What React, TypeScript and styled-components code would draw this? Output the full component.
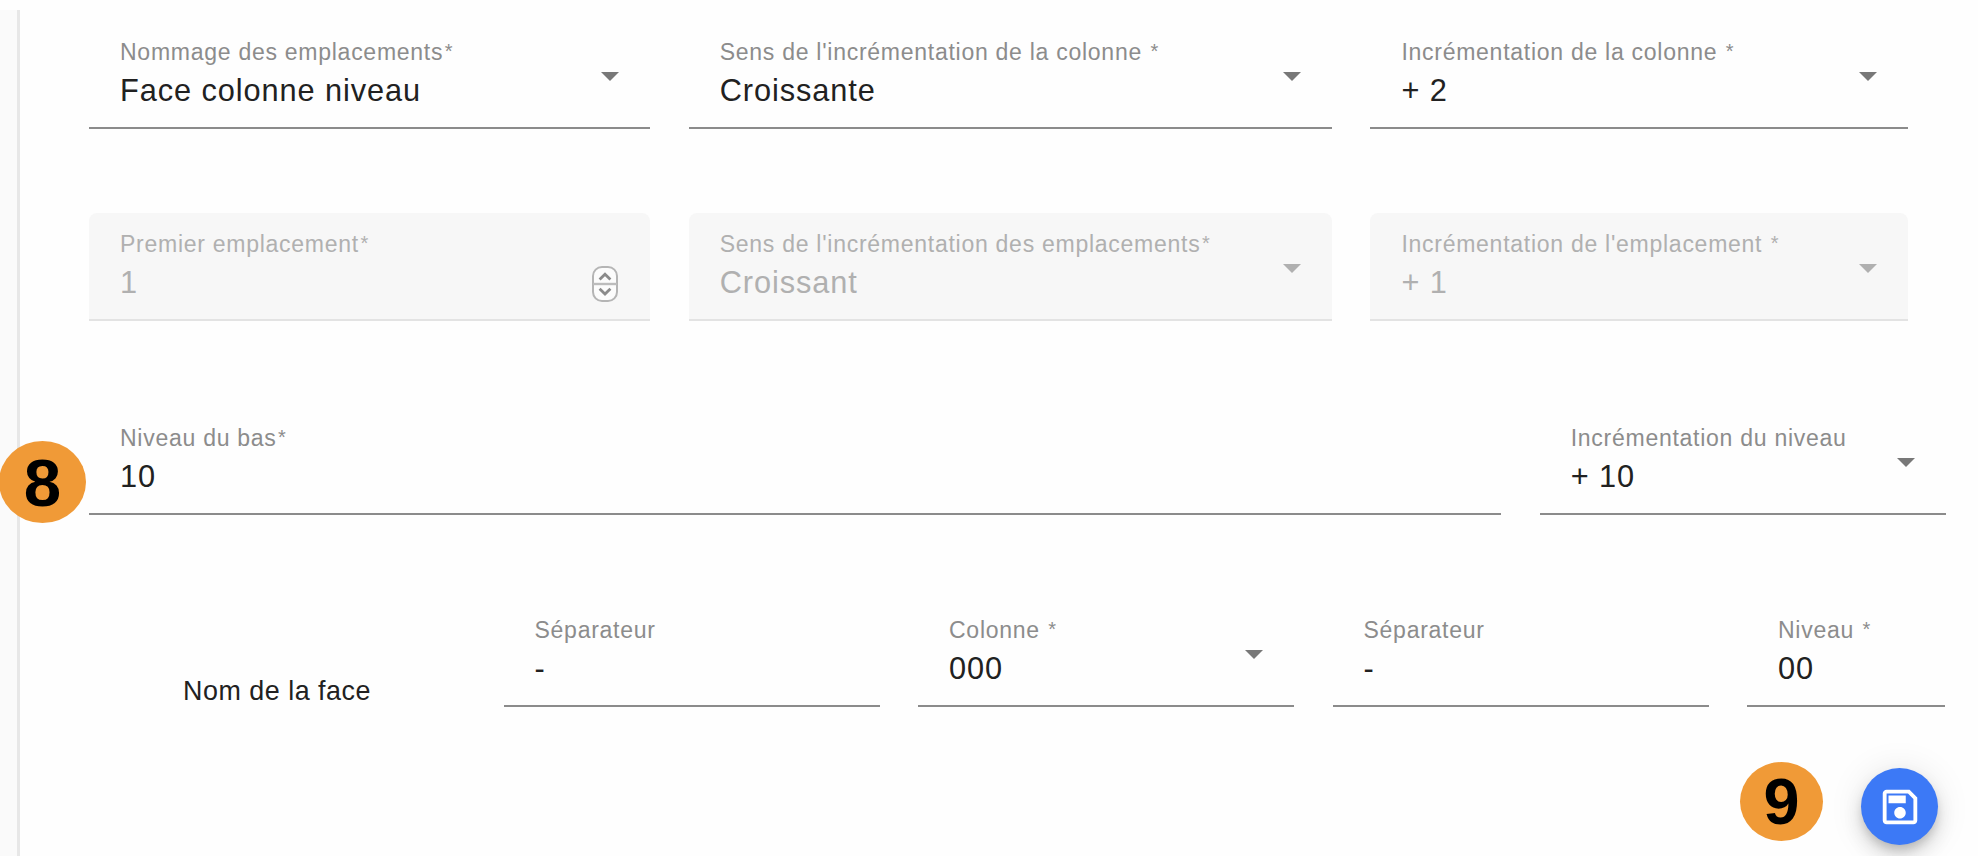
import React from 'react';
import styled, { createGlobalStyle } from 'styled-components';

const palette = {
  background: '#fefefe',
  sidebar: '#fafafa',
  sidebarBorder: '#e7e7e7',
  text: '#212121',
  label: '#8c8c8c',
  line: '#8b8b8b',
  arrow: '#787878',
  disabledBackground: '#f7f7f7',
  disabledText: '#b0b0b0',
  disabledLine: '#e3e3e3',
  orange: '#f09a37',
  blue: '#3c79f6',
};

const GlobalStyle = createGlobalStyle`
  * {
    box-sizing: border-box;
  }

  body {
    margin: 0;
    overflow: hidden;
    background-color: ${palette.background};
    font-family: 'Liberation Sans', Arial, Helvetica, sans-serif;
  }
`;

const PageContainer = styled.div`
  position: relative;
  display: flex;
  width: 1978px;
  height: 856px;
  overflow: hidden;
`;

const SidebarEdge = styled.div`
  width: 20px;
  margin-top: 10px;
  background-color: ${palette.sidebar};
  border-right: 3px solid ${palette.sidebarBorder};
`;

const FormContainer = styled.div`
  display: flex;
  flex: 1;
  flex-direction: column;
  padding: 21px 32px 0 69px;
`;

const FormRow = styled.div<{ $columns: string; $gap?: string; $spacing?: string }>`
  display: grid;
  grid-template-columns: ${props => props.$columns};
  column-gap: ${props => props.$gap || '38.7px'};
  margin-bottom: ${props => props.$spacing || '84px'};
`;

const FieldContainer = styled.div<{ $disabled?: boolean }>`
  display: flex;
  justify-content: space-between;
  height: 108px;
  padding: 17px 31px 0;
  border-bottom: 2px solid ${props => props.$disabled ? palette.disabledLine : palette.line};
  border-radius: ${props => props.$disabled ? '8px 8px 0 0' : '0'};
  background-color: ${props => props.$disabled ? palette.disabledBackground : 'transparent'};
`;

const FieldContent = styled.div`
  display: flex;
  flex-direction: column;
  white-space: nowrap;
`;

const FieldLabel = styled.div<{ $disabled?: boolean }>`
  height: 28px;
  font-size: 23.04px;
  line-height: 28px;
  letter-spacing: 0.72px;
  color: ${props => props.$disabled ? palette.disabledText : palette.label};
`;

const FieldMarker = styled.span<{ $spaced?: boolean }>`
  margin-left: ${props => props.$spaced ? '8.5px' : '1.5px'};
  font-size: 20px;
  line-height: 1;
  vertical-align: 2px;
`;

const FieldValue = styled.div<{ $disabled?: boolean }>`
  margin-top: 7px;
  font-size: 30.72px;
  line-height: 36px;
  letter-spacing: 0.92px;
  color: ${props => props.$disabled ? palette.disabledText : palette.text};
`;

const SelectArrow = styled.div<{ $disabled?: boolean }>`
  width: 0;
  height: 0;
  margin-top: 34px;
  border-left: 9.5px solid transparent;
  border-right: 9.5px solid transparent;
  border-top: 9.6px solid ${props => props.$disabled ? palette.disabledText : palette.arrow};
`;

const StepperIcon = styled.svg`
  width: 26px;
  height: 36px;
  margin: 36px 1px 0 0;
`;

const Stepper = () => {
  return (
    <StepperIcon viewBox="0 0 26 36" fill="none">
      <rect x="1" y="1" width="24" height="34" rx="9" fill="#fcfcfc" stroke="#b5b5b5" strokeWidth="2" />
      <path d="M1 18h24" stroke="#bcbcbc" strokeWidth="2.4" />
      <path d="M7.6 13.4l5.4-5.2 5.4 5.2M7.6 22.8l5.4 5.2 5.4-5.2" stroke="#8b8b8b" strokeWidth="2.8" />
    </StepperIcon>
  );
};

interface FieldProps {
  label: string;
  value: string;
  marker?: 'tight' | 'spaced';
  disabled?: boolean;
  control?: 'select' | 'stepper';
}

const Field: React.FC<FieldProps> = ({ label, value, marker, disabled, control }) => {
  return (
    <FieldContainer $disabled={disabled}>
      <FieldContent>
        <FieldLabel $disabled={disabled}>
          {label}
          {marker && <FieldMarker $spaced={marker === 'spaced'}>*</FieldMarker>}
        </FieldLabel>
        <FieldValue $disabled={disabled}>{value}</FieldValue>
      </FieldContent>
      {control === 'select' && <SelectArrow $disabled={disabled} />}
      {control === 'stepper' && <Stepper />}
    </FieldContainer>
  );
};

const FaceName = styled.div`
  display: flex;
  justify-content: center;
  padding-top: 76px;
  font-size: 26.88px;
  line-height: 32px;
  letter-spacing: 0.5px;
  color: ${palette.text};
`;

const FormActions = styled.div`
  display: flex;
  justify-content: flex-end;
  margin-top: -23px;
  padding-right: 8px;
`;

const SaveButton = styled.button`
  display: flex;
  align-items: center;
  justify-content: center;
  width: 77px;
  height: 77px;
  padding: 0;
  border: none;
  border-radius: 50%;
  background-color: ${palette.blue};
  box-shadow: 0 6px 10px -2px rgba(0, 0, 0, 0.16), 0 12px 19px rgba(0, 0, 0, 0.12),
    0 2px 35px rgba(0, 0, 0, 0.1);
`;

const SaveIcon = () => {
  return (
    <svg width="46" height="46" viewBox="0 0 24 24" fill="#fff">
      <path d="M17 3H5c-1.11 0-2 .9-2 2v14c0 1.1.89 2 2 2h14c1.1 0 2-.9 2-2V7l-4-4zm2 16H5V5h11.17L19 7.83V19zm-7-7c-1.66 0-3 1.34-3 3s1.34 3 3 3 3-1.34 3-3-1.34-3-3-3zM6 6h9v4H6z" />
    </svg>
  );
};

const StepBadge = styled.div<{ $left: number; $top: number; $width: number; $height: number }>`
  position: absolute;
  left: ${props => props.$left}px;
  top: ${props => props.$top}px;
  display: flex;
  align-items: center;
  justify-content: center;
  width: ${props => props.$width}px;
  height: ${props => props.$height}px;
  padding-top: 2px;
  border-radius: 50%;
  background-color: ${palette.orange};
  color: #000;
  font-size: ${props => props.$height * 0.82}px;
  font-weight: 700;
  line-height: 1;
`;

const App = () => {
  return (
    <PageContainer>
      <GlobalStyle />
      <SidebarEdge />
      <FormContainer>
        <FormRow $columns="561px 643px 538px">
          <Field label="Nommage des emplacements" value="Face colonne niveau" marker="tight" control="select" />
          <Field label="Sens de l'incrémentation de la colonne" value="Croissante" marker="spaced" control="select" />
          <Field label="Incrémentation de la colonne" value="+ 2" marker="spaced" control="select" />
        </FormRow>
        <FormRow $columns="561px 643px 538px" $spacing="86px">
          <Field label="Premier emplacement" value="1" marker="tight" disabled control="stepper" />
          <Field label="Sens de l'incrémentation des emplacements" value="Croissant" marker="tight" disabled control="select" />
          <Field label="Incrémentation de l'emplacement" value="+ 1" marker="spaced" disabled control="select" />
        </FormRow>
        <FormRow $columns="1412px 406px">
          <Field label="Niveau du bas" value="10" marker="tight" />
          <Field label="Incrémentation du niveau" value="+ 10" control="select" />
        </FormRow>
        <FormRow $columns="repeat(4, 376px) 198px" $gap="38.5px">
          <FaceName>Nom de la face</FaceName>
          <Field label="Séparateur" value="-" />
          <Field label="Colonne" value="000" marker="spaced" control="select" />
          <Field label="Séparateur" value="-" />
          <Field label="Niveau" value="00" marker="spaced" />
        </FormRow>
        <FormActions>
          <SaveButton aria-label="Enregistrer">
            <SaveIcon />
          </SaveButton>
        </FormActions>
      </FormContainer>
      <StepBadge $left={-1} $top={441} $width={87} $height={82}>8</StepBadge>
      <StepBadge $left={1740} $top={762} $width={83} $height={79}>9</StepBadge>
    </PageContainer>
  );
};

export default App;
